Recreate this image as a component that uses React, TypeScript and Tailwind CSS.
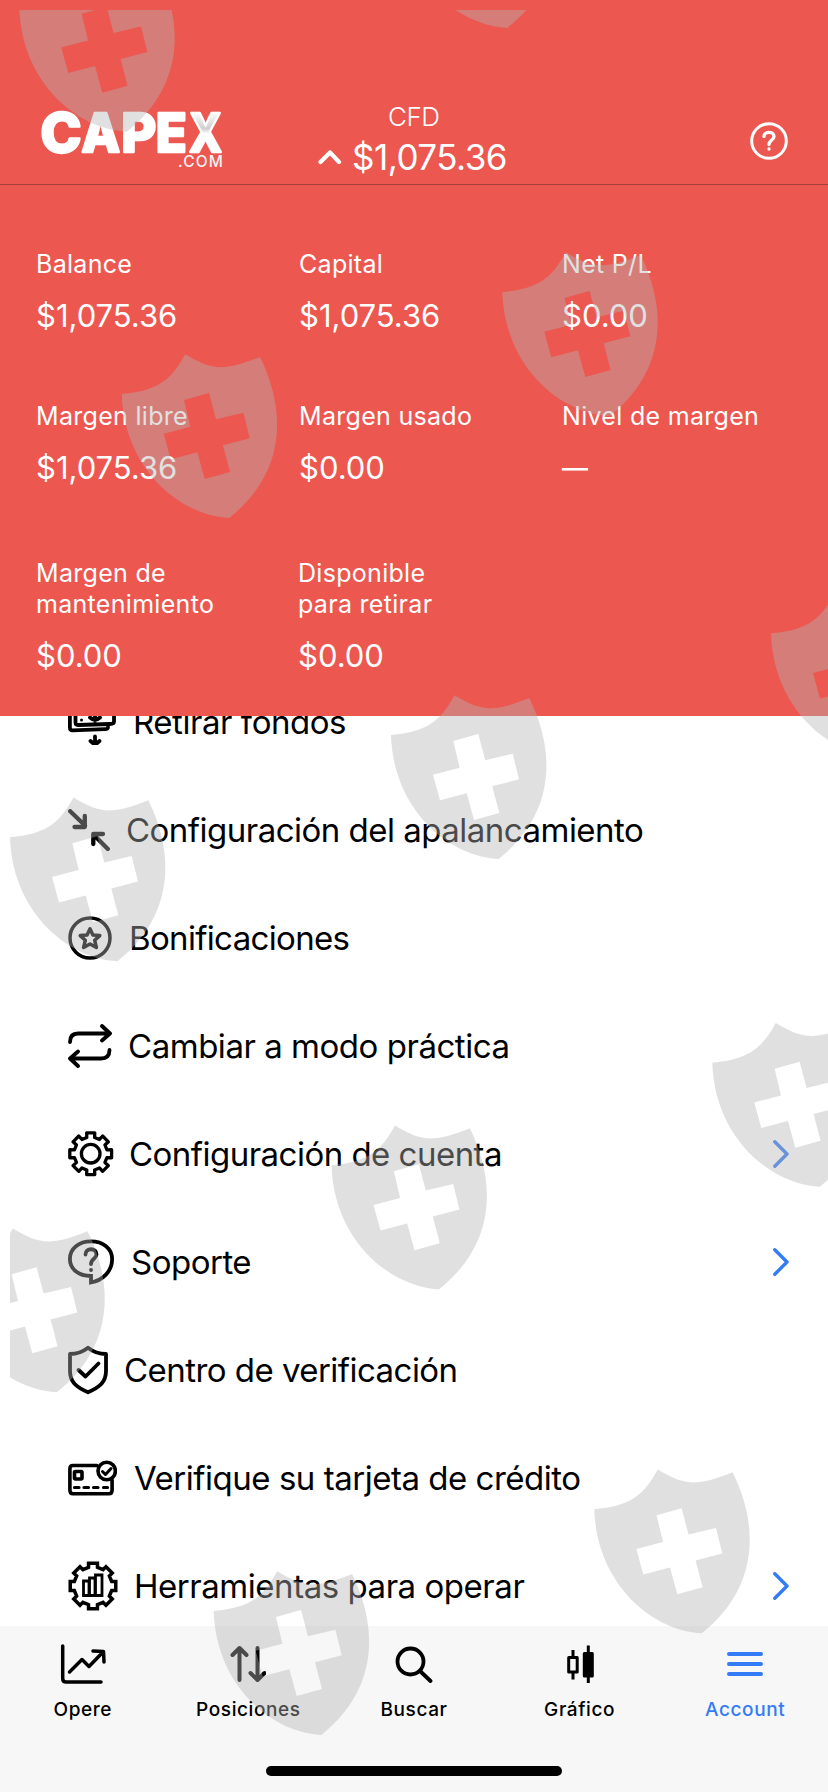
import React from "react";

interface IStat {
  label: string;
  value: string;
}

interface IMenuItem {
  title: string;
  icon: React.ReactNode;
  className: string;
  arrow?: boolean;
}

const stats: IStat[] = [
  { label: "Balance", value: "$1,075.36" },
  { label: "Capital", value: "$1,075.36" },
  { label: "Net P/L", value: "$0.00" },
  { label: "Margen libre", value: "$1,075.36" },
  { label: "Margen usado", value: "$0.00" },
  { label: "Nivel de margen", value: "—" },
];

const shields = [
  [19.3, 7.7],
  [399.7, -96],
  [121.7, 394],
  [502.3, 292],
  [391, 735],
  [771, 633.3],
  [10, 837.3],
  [712.3, 1062.7],
  [331.5, 1165.3],
  [-50.7, 1268.2],
  [594.3, 1509.3],
  [213.7, 1611],
];

function Icon(props: {
  width: number;
  height: number;
  stroke?: number;
  children: React.ReactNode;
}) {
  return (
    <svg
      width={props.width}
      height={props.height}
      viewBox={`0 0 ${props.width} ${props.height}`}
      fill="none"
      stroke="currentColor"
      strokeWidth={props.stroke || 3.8}
      strokeLinecap="round"
      strokeLinejoin="round"
      className="shrink-0"
    >
      {props.children}
    </svg>
  );
}

// closed outline of a cog with flat teeth
function cog(c: number, outer: number, inner: number, teeth: number) {
  const points: string[] = [];
  const step = (Math.PI * 2) / teeth;

  for (let i = 0; i < teeth; i++) {
    const mid = i * step - Math.PI / 2;
    const corners = [
      [inner, -0.3],
      [outer, -0.245],
      [outer, 0.245],
      [inner, 0.3],
    ];
    corners.forEach(([r, k]) => {
      const a = mid + k * step;
      points.push(`${c + r * Math.cos(a)},${c + r * Math.sin(a)}`);
    });
  }

  return points.join(" ");
}

const menu: IMenuItem[] = [
  {
    title: "Retirar fondos",
    className: "pl-[17px] tracking-[-0.45px]",
    icon: (
      <Icon width={48} height={46}>
        <path d="M7.500 8V23.500Q7.500 26 10 26L42 25Q46 25 46 22.500V6" />
        <path d="M1.900 11V28.500Q1.900 31.400 4.500 31.400L37 30.200Q40 30.200 40 28" />
        <path d="M27 10V22M22 18.500Q27 23 32 18.500" />
        <path d="M13.500 21V21.100" strokeWidth="3" />
        <path d="M27 37.500V45M22.500 42L27 46L31.500 42" />
      </Icon>
    ),
  },
  {
    title: "Configuración del apalancamiento",
    className: "pl-[16px] tracking-[-0.51px]",
    icon: (
      <Icon width={42} height={42} stroke={4.3}>
        <path d="M2.200 2.200L17 16.500M16.800 7V18H6.500M39.800 40L26 26M25.300 35V25H35" />
      </Icon>
    ),
  },
  {
    title: "Bonificaciones",
    className: "pl-[17px] tracking-[-0.66px]",
    icon: (
      <Icon width={44} height={44} stroke={3.5}>
        <circle cx="22" cy="22" r="20" />
        <path d="M22 12.800L24.900 18.900L31.800 19.600L26.700 24.300L28.400 31.500L22 28L15.600 31.500L17.300 24.300L12.200 19.600L19.100 18.900Z" />
      </Icon>
    ),
  },
  {
    title: "Cambiar a modo práctica",
    className: "pl-[16px] tracking-[-0.47px]",
    icon: (
      <Icon width={44} height={44}>
        <path d="M2 18Q2 9.500 10 9.500H41M34 2L42 9.500L34 16.500" />
        <path d="M41.500 26Q41.500 34.500 33 34.500H3M10 27.500L2 34.500L10 42" />
      </Icon>
    ),
  },
  {
    title: "Configuración de cuenta",
    className: "pl-[15px] tracking-[-0.52px]",
    arrow: true,
    icon: (
      <Icon width={46} height={46} stroke={3.3}>
        <polygon points={cog(22.7, 21.3, 16.7, 8)} />
        <circle cx="22.700" cy="22.700" r="9.300" />
      </Icon>
    ),
  },
  {
    title: "Soporte",
    className: "pl-[17px] tracking-[-0.5px]",
    arrow: true,
    icon: (
      <Icon width={46} height={46}>
        <path
          d="M23 37C10.500 37 1.900 30 1.900 20C1.900 9.500 11 2.400 23 2.400S44.100 9.500 44.100 20C44.100 33 34 41.500 23 43.500Z"
          strokeLinejoin="miter"
        />
        <path d="M17.500 15.500C17.500 8.500 28.500 8.500 28.500 15.500C28.500 20 23 19.500 23 25" />
        <path d="M23 30.800V31" />
      </Icon>
    ),
  },
  {
    title: "Centro de verificación",
    className: "pl-[16px] tracking-[-0.54px]",
    icon: (
      <Icon width={40} height={50}>
        <path d="M20 2.700Q28 9 38 9V26C38 37 32 42 20 47.300C8 42 2 37 2 26V9Q12 9 20 2.700Z" />
        <path d="M10.500 25L17.500 31.500L30.500 18.500" />
      </Icon>
    ),
  },
  {
    title: "Verifique su tarjeta de crédito",
    className: "pl-[17px] tracking-[-0.48px]",
    icon: (
      <Icon width={49} height={36} stroke={3.6}>
        <path d="M29 5.500H5Q1.900 5.500 1.900 9V30Q1.900 33.700 5 33.700H41Q44.100 33.700 44.100 30V20" />
        <rect x="6.500" y="11.500" width="7.500" height="7.500" rx="1" />
        <path d="M6.500 27.500H11M16 27.500H20.500M25.500 27.500H30M35.500 27.500H39.500" strokeWidth="3.200" />
        <circle cx="38.700" cy="11" r="8.700" />
        <path d="M34.500 11.500L37.500 14.500L43 8.500" strokeWidth="3" />
      </Icon>
    ),
  },
  {
    title: "Herramientas para operar",
    className: "pl-[16px] tracking-[-0.46px]",
    arrow: true,
    icon: (
      <Icon width={50} height={50} stroke={3.5}>
        <polygon points={cog(25, 23.2, 19.2, 8)} strokeLinejoin="miter" />
        <path
          d="M15.500 34.500V20H21V34.500ZM21.500 34.500V17H27V34.500ZM27.500 34.500V14H34V34.500Z"
          strokeWidth="2.800"
          strokeLinejoin="miter"
        />
      </Icon>
    ),
  },
];

const tabs = [
  {
    title: "Opere",
    icon: (
      <Icon width={48} height={42} stroke={3.5}>
        <path d="M3.700 3V35.500Q3.700 39 7 39H42" />
        <path d="M10.500 29L23 16.500L30 23.500L44 9M34 8L44.500 8.500L45 19" />
      </Icon>
    ),
  },
  {
    title: "Posiciones",
    icon: (
      <Icon width={36} height={38} stroke={4}>
        <path d="M9.500 35V4M2.500 10L9.500 3L16.500 10M27.500 3V34M20.500 28L27.500 35L34.500 28" />
      </Icon>
    ),
  },
  {
    title: "Buscar",
    icon: (
      <Icon width={38} height={38} stroke={3.8}>
        <circle cx="15.500" cy="16.500" r="13" />
        <path d="M25 26L35.500 36" />
      </Icon>
    ),
  },
  {
    title: "Gráfico",
    icon: (
      <Icon width={28} height={38} stroke={3}>
        <path d="M7 5V11M7 28V34.500M22.300 0.500V38" strokeLinecap="butt" />
        <rect x="2.700" y="12.500" width="8.500" height="14.500" />
        <rect x="18.300" y="8.500" width="8" height="22.500" fill="currentColor" />
      </Icon>
    ),
  },
  {
    title: "Account",
    icon: (
      <Icon width={36} height={38} stroke={4}>
        <path d="M2 9H34M2 19H34M2 29H34" />
      </Icon>
    ),
  },
];

function Logo() {
  return (
    <svg width="190" height="90" viewBox="0 0 190 90">
      <defs>
        <linearGradient id="fold" x1="0" y1="0" x2="0" y2="1">
          <stop offset="0.25" stopColor="#f3f3f3" />
          <stop offset="0.44" stopColor="#cfcfcf" />
          <stop offset="0.52" stopColor="#ffffff" />
        </linearGradient>
      </defs>
      <g
        fill="white"
        stroke="white"
        strokeWidth="2.500"
        strokeLinejoin="round"
        fontFamily="Inter, sans-serif"
        fontWeight="800"
        fontSize="54"
      >
        <text y="60" x="1.500" textLength="41" lengthAdjust="spacingAndGlyphs">C</text>
        <text y="60" x="42.500" textLength="38.500" lengthAdjust="spacingAndGlyphs">A</text>
        <text y="60" x="82.300" textLength="35" lengthAdjust="spacingAndGlyphs">P</text>
        <text y="60" x="116.800" textLength="31" lengthAdjust="spacingAndGlyphs">E</text>
        <text y="60" x="150" textLength="33" lengthAdjust="spacingAndGlyphs" fill="url(#fold)">X</text>
      </g>
      <text
        x="139"
        y="75"
        fill="#f2f2f2"
        fontFamily="Inter, sans-serif"
        fontWeight="500"
        fontSize="15.500"
        textLength="45"
      >
        .COM
      </text>
    </svg>
  );
}

function Stat(props: IStat) {
  return (
    <div>
      <p className="text-[25px] leading-[31px] tracking-[0.3px] whitespace-pre-line">
        {props.label}
      </p>
      <p
        className={`mt-[17px] leading-[38px] ${
          props.value === "—" ? "text-[26px] font-medium" : "text-[31px]"
        }`}
      >
        {props.value}
      </p>
    </div>
  );
}

function Shields() {
  return (
    <svg
      width="828"
      height="1792"
      className="absolute top-0 left-0 pointer-events-none"
    >
      <clipPath id="frame">
        <rect x="10" y="10" width="818" height="1782" />
      </clipPath>
      <g clipPath="url(#frame)" fill="#b4b4b4" fillOpacity="0.412">
        {shields.map(([x, y], index) => (
          <path
            key={index}
            transform={`translate(${x} ${y})`}
            fillRule="evenodd"
            d="M0 0C35 -3 49 -13 63.500 -39.700C90 -24 101 -22 138.300 -37C166 19 163 80 107.500 124C55 121 2 72 0 0ZM62.300 6L68.700 32.700L42 39.700L49 65.300L75.700 58.300L83 85L108.300 78L101.300 51.300L128 44.300L121.700 18.700L94.300 25.300L87.300 -1Z"
          />
        ))}
      </g>
    </svg>
  );
}

export default function App() {
  return (
    <div className="relative w-[828px] h-[1792px] overflow-hidden flex flex-col bg-white text-black font-['Inter',sans-serif]">
      <header className="h-[716px] shrink-0 bg-[#ec5750] text-white">
        <div className="h-[185px] border-b border-[#a43f3b] flex items-end justify-between pl-[39px] pr-[40px]">
          <div className="w-[279px] pb-[2px]">
            <Logo />
          </div>
          <div className="flex-1 flex flex-col pb-[4px]">
            <p className="pl-[70px] text-[26px] leading-[34px] font-light tracking-[-0.5px]">
              CFD
            </p>
            <div className="flex items-center gap-[10px]">
              <Icon width={24} height={16} stroke={4.2}>
                <path d="M2.500 13L12 3.500L21 13" />
              </Icon>
              <p className="text-[35px] leading-[46px] tracking-[-0.5px]">
                $1,075.36
              </p>
            </div>
          </div>
          <div className="pb-[24px]">
            <Icon width={38} height={38} stroke={3}>
              <circle cx="19" cy="19" r="17.300" />
              <path
                d="M14 14.500C14 9 24 9 24 14.500C24 18 19 18 19 22.500M19 26.800V27"
                strokeWidth="3.300"
              />
            </Icon>
          </div>
        </div>

        <div className="pl-[36px] pt-[64px] grid grid-cols-[263px_263px_1fr] gap-y-[66px]">
          {stats.map((stat) => (
            <Stat key={stat.label} {...stat} />
          ))}
        </div>
        <div className="pl-[36px] pt-[71px] grid grid-cols-[262px_1fr]">
          <Stat label={"Margen de\nmantenimiento"} value="$0.00" />
          <Stat label={"Disponible\npara retirar"} value="$0.00" />
        </div>
      </header>

      <main className="h-[910px] shrink-0 overflow-hidden">
        <ul className="-mt-[48px]">
          {menu.map((item) => (
            <li
              key={item.title}
              className="h-[108px] pl-[68px] pr-[39px] flex items-center"
            >
              {item.icon}
              <span
                className={`flex-1 text-[33px] leading-[40px] whitespace-nowrap ${item.className}`}
              >
                {item.title}
              </span>
              {item.arrow && (
                <span className="text-[#347cf6]">
                  <Icon width={16} height={28} stroke={3.4}>
                    <path d="M1.800 1.800L14 14L1.800 26.200" />
                  </Icon>
                </span>
              )}
            </li>
          ))}
        </ul>
      </main>

      <nav className="h-[166px] shrink-0 bg-[#f7f7f7] flex flex-col items-center">
        <div className="w-full pt-px grid grid-cols-5">
          {tabs.map((tab) => (
            <div
              key={tab.title}
              className={`flex flex-col items-center ${
                tab.title === "Account" ? "text-[#347cf6]" : ""
              }`}
            >
              <div className="h-[70px] pt-[4px] flex items-center">{tab.icon}</div>
              <span className="text-[19px] leading-[26px] font-medium tracking-[0.6px]">
                {tab.title}
              </span>
            </div>
          ))}
        </div>
        <div className="mt-[43px] w-[296px] h-[10px] rounded-full bg-black" />
      </nav>

      <Shields />
    </div>
  );
}
